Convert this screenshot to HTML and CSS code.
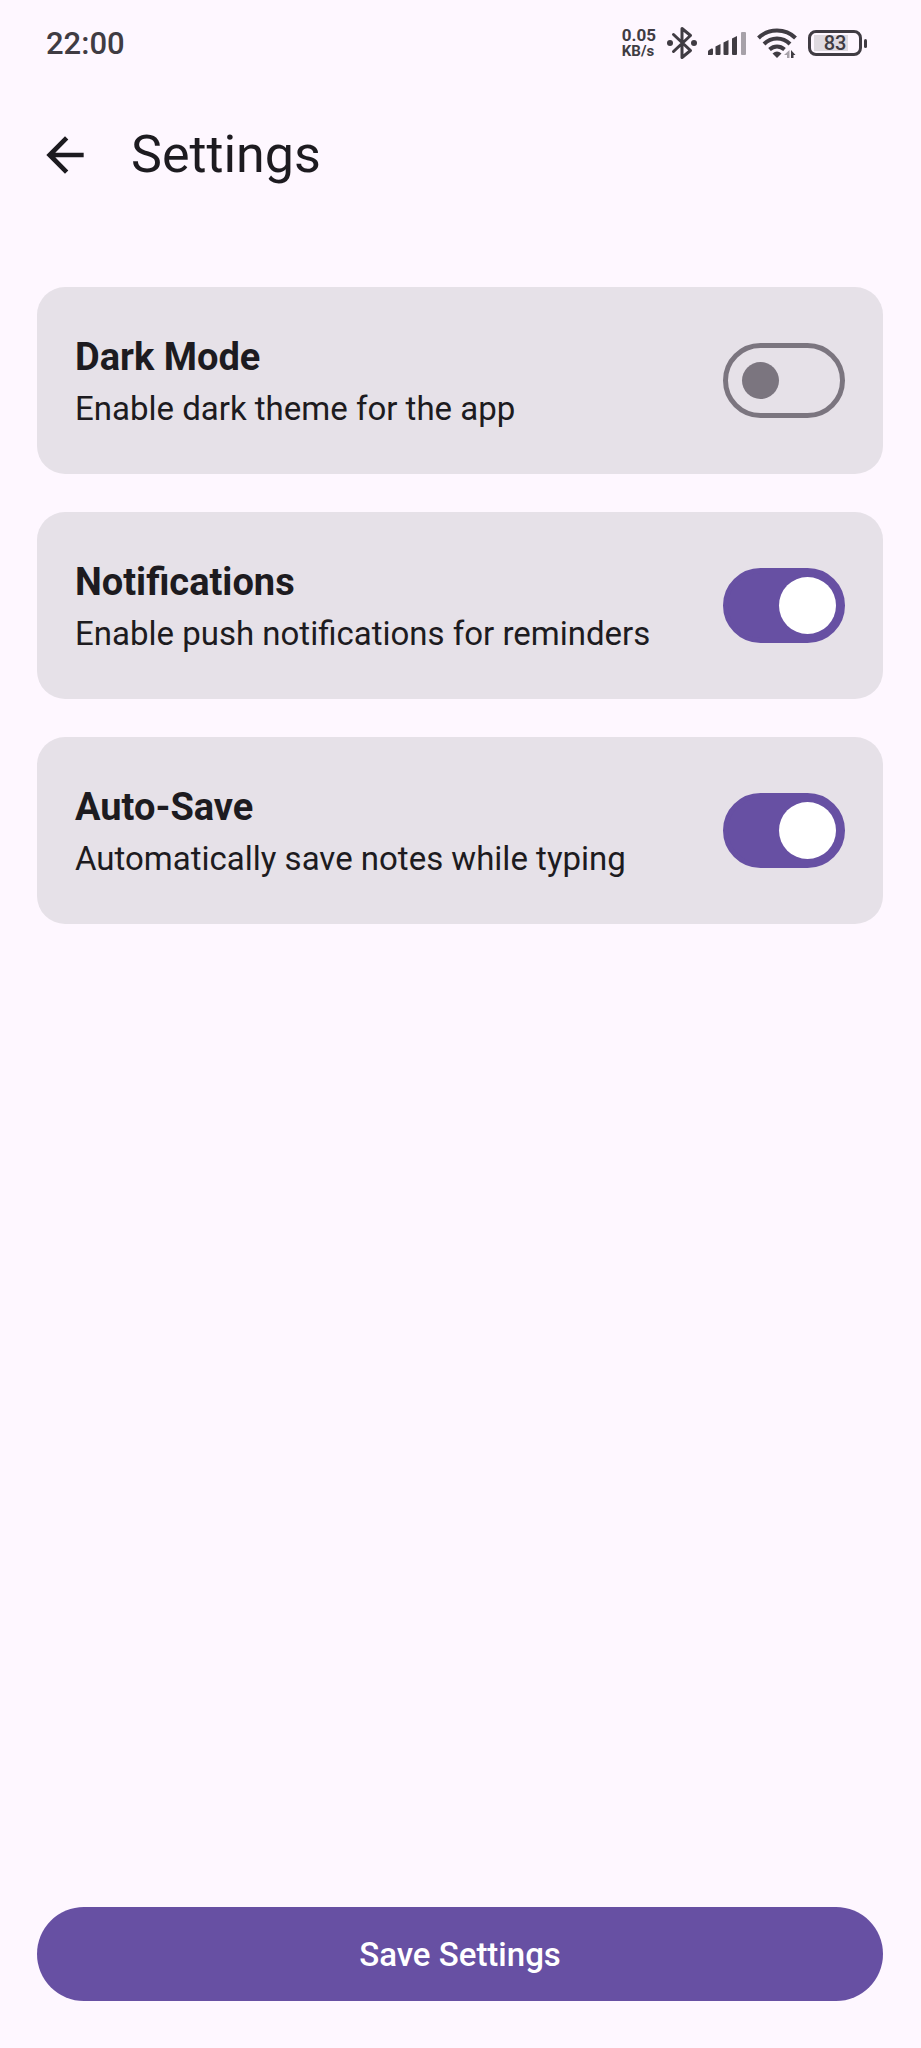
FILE: index.html
```html
<!DOCTYPE html>
<html lang="en">
<head>
  <meta charset="utf-8">
  <meta name="viewport" content="width=device-width, initial-scale=1">
  <title>Settings</title>
  <link rel="stylesheet" href="styles.css">
</head>
<body>
  <div class="screen">
    <div class="status-bar">
      <time class="clock">22:00</time>
      <div class="status-icons">
        <div class="net-speed"><span class="net-value">0.05</span><span class="net-unit">KB/s</span></div>
        <svg class="bluetooth" width="30" height="36" viewBox="1 0 30 36" aria-hidden="true">
          <path d="M7.500 9.500L24.500 25.500L16 32.500V3.500L24.500 10.500L7.500 26.500" fill="none" stroke="currentColor" stroke-width="3" stroke-linejoin="round" stroke-linecap="round"/>
          <circle cx="4" cy="18" r="3"/>
          <circle cx="28" cy="18" r="3"/>
        </svg>
        <svg class="signal" width="38" height="26" viewBox="0 0 38 26" aria-hidden="true">
          <path d="M0 25v-3.500q0-1 1-1.500l2.500-1.500q1.500-.5 1.500 1V24q0 1-1 1z"/>
          <path d="M7.500 16.500l5-2.500V24q0 1-1 1h-3q-1 0-1-1z"/>
          <path d="M15.500 12.500l5-2.500V24q0 1-1 1h-3q-1 0-1-1z"/>
          <path d="M24 8.500l5-2.500v18q0 1-1 1h-3q-1 0-1-1z"/>
          <rect class="dim" x="33" y="2" width="5" height="23" rx="1"/>
        </svg>
        <svg class="wifi" width="40" height="32" viewBox="0 0 40 32" aria-hidden="true">
          <g fill="none" stroke="currentColor" stroke-width="4">
            <path d="M1.500 11Q9 3.500 20 3.500T38.500 11"/>
            <path d="M7 17Q12.500 11.500 20 11.500T33 17"/>
            <path d="M12.500 22.500Q16 19.500 20 19.500T27.500 22.500"/>
          </g>
          <path d="M15.500 26.500Q20 22.500 24.500 26.500L20 31z"/>
          <path class="dim" d="M32.500 23v8H30v-3h-3z"/>
          <path d="M34 23l4.500 5H36.500v3H34z"/>
        </svg>
        <div class="battery"><span class="battery-body">83</span><span class="battery-cap"></span></div>
      </div>
    </div>

    <header class="app-bar">
      <button class="back" type="button" aria-label="Back">
        <svg width="56" height="56" viewBox="0 0 24 24" aria-hidden="true"><path d="M20 11H7.830l5.590-5.590L12 4l-8 8 8 8 1.410-1.410L7.830 13H20v-2z"/></svg>
      </button>
      <h1 class="title">Settings</h1>
    </header>

    <form class="settings">
      <label class="card" for="dark-mode">
        <span class="card-text">
          <span class="card-title">Dark Mode</span>
          <span class="card-note">Enable dark theme for the app</span>
        </span>
        <input class="switch" type="checkbox" role="switch" id="dark-mode">
      </label>
      <label class="card" for="notifications">
        <span class="card-text">
          <span class="card-title">Notifications</span>
          <span class="card-note">Enable push notifications for reminders</span>
        </span>
        <input class="switch" type="checkbox" role="switch" id="notifications" checked>
      </label>
      <label class="card" for="auto-save">
        <span class="card-text">
          <span class="card-title">Auto-Save</span>
          <span class="card-note">Automatically save notes while typing</span>
        </span>
        <input class="switch" type="checkbox" role="switch" id="auto-save" checked>
      </label>
      <button class="save" type="submit">Save Settings</button>
    </form>
  </div>
</body>
</html>
```
FILE: styles.css
```css
:root {
  --surface: #fef7ff;
  --card: #e6e1e8;
  --ink: #1d1b20;
  --status: #403c43;
  --outline: #7b757f;
  --primary: #6750a3;
}

* {
  box-sizing: border-box;
}

body {
  margin: 0;
  background: var(--surface);
  color: var(--ink);
  font-family: Roboto, "Noto Sans", sans-serif;
}

.screen {
  display: flex;
  flex-direction: column;
  min-height: 100vh;
}

.status-bar {
  display: flex;
  justify-content: space-between;
  align-items: flex-start;
  height: 80px;
  padding: 24px 54px 0 46px;
  color: var(--status);
}

.clock {
  font-size: 31px;
  font-weight: 500;
  line-height: 40px;
}

.status-icons {
  display: flex;
  align-items: center;
  gap: 11px;
  height: 38px;
}

.status-icons svg {
  display: block;
  fill: currentColor;
}

.status-icons .dim {
  fill: #a7a1a9;
}

.net-speed {
  display: flex;
  flex-direction: column;
  font-weight: 700;
  line-height: 16px;
}

.net-value {
  font-size: 17px;
}

.net-unit {
  font-size: 15px;
}

.battery {
  display: flex;
  align-items: center;
  gap: 2px;
}

.battery-body {
  display: flex;
  align-items: center;
  justify-content: center;
  width: 54px;
  height: 26px;
  border: 3px solid currentColor;
  border-radius: 8px;
  background: linear-gradient(#dfdae0, #dfdae0) 3px center / 34px 16px no-repeat;
  font-size: 20px;
  font-weight: 500;
  line-height: 20px;
}

.battery-cap {
  width: 3px;
  height: 9px;
  border-radius: 2px;
  background: currentColor;
}

.app-bar {
  display: flex;
  align-items: center;
  gap: 10px;
  height: 150px;
  padding: 0 8px;
}

.back {
  display: grid;
  place-items: center;
  width: 113px;
  height: 113px;
  padding: 0;
  border: 0;
  background: none;
  color: inherit;
}

.back svg {
  fill: currentColor;
}

.title {
  margin: 0;
  font-size: 52px;
  font-weight: 400;
  line-height: 66px;
}

.settings {
  display: flex;
  flex: 1;
  flex-direction: column;
  gap: 38px;
  padding: 57px 38px 47px 37px;
}

.card {
  display: flex;
  align-items: center;
  justify-content: space-between;
  gap: 38px;
  min-height: 187px;
  padding: 38px;
  border-radius: 28px;
  background: var(--card);
}

.card-text {
  display: flex;
  flex-direction: column;
}

.card-title {
  font-size: 38px;
  font-weight: 700;
  line-height: 56px;
}

.card-note {
  font-size: 33px;
  line-height: 47px;
}

.switch {
  display: flex;
  flex: none;
  align-items: center;
  appearance: none;
  width: 122px;
  height: 75px;
  margin: 0;
  padding: 0 14px;
  border: 5px solid var(--outline);
  border-radius: 38px;
}

.switch::before {
  content: "";
  width: 37px;
  height: 37px;
  border-radius: 50%;
  background: var(--outline);
}

.switch:checked {
  justify-content: flex-end;
  padding: 0 4px;
  border-color: var(--primary);
  background: var(--primary);
}

.switch:checked::before {
  width: 57px;
  height: 57px;
  background: #fff;
}

.save {
  height: 94px;
  margin-top: auto;
  border: 0;
  border-radius: 47px;
  background: var(--primary);
  color: #fff;
  font: 500 33px/47px Roboto, "Noto Sans", sans-serif;
}
```
